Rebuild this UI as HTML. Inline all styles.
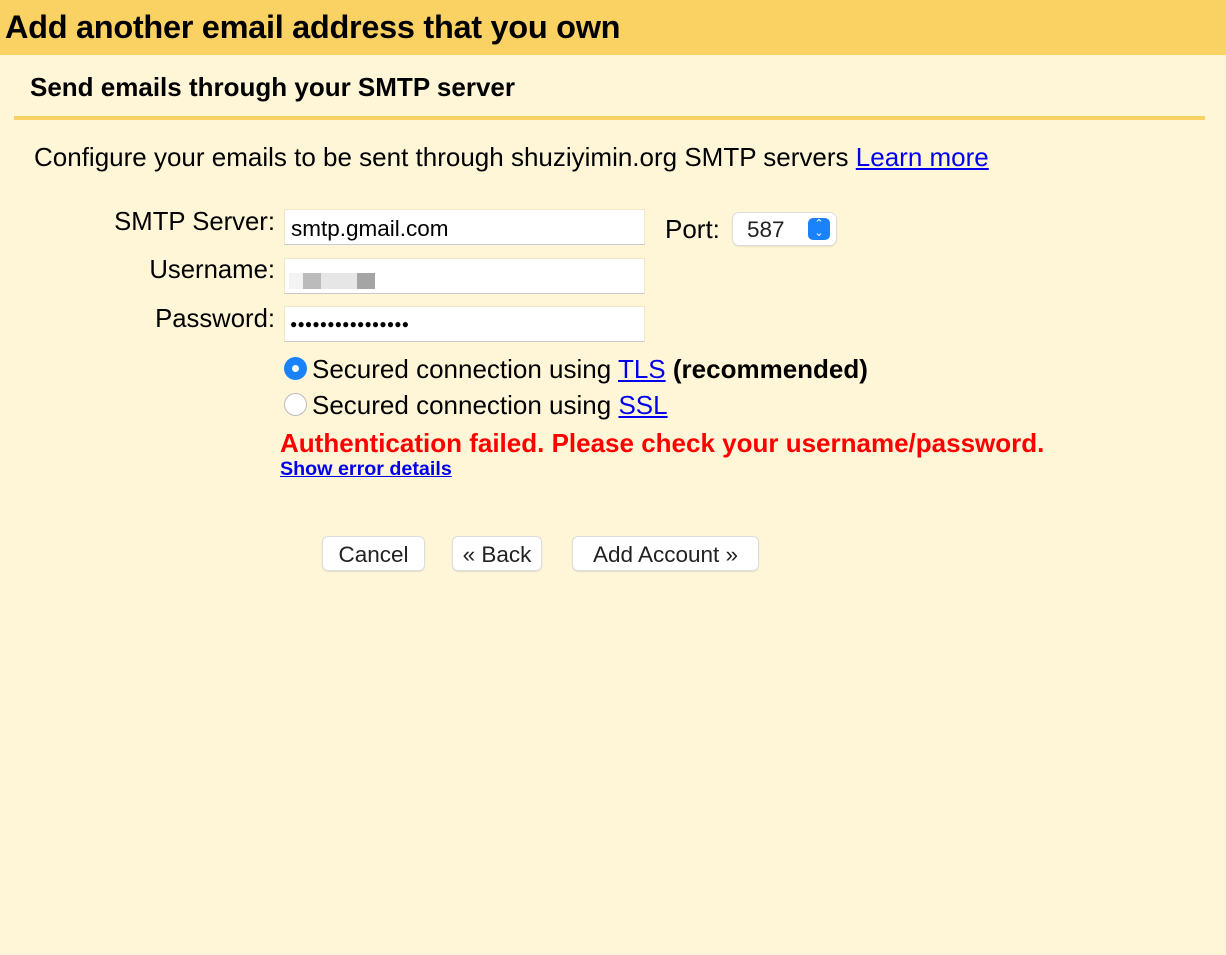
<!DOCTYPE html>
<html><head><style>
body{margin:0;width:1226px;height:955px;background:#fff6d8;font-family:"Liberation Sans",Arial,sans-serif;position:relative;overflow:hidden}
.a{position:absolute;white-space:nowrap}
.hdr{position:absolute;left:0;top:0;width:1226px;height:55px;background:#fad264}
.inp{position:absolute;left:284px;width:361px;height:36px;background:#fff;border:1px solid #f0e6c8;border-bottom:1px solid #c9c9c9;box-sizing:border-box;font-size:22.5px;line-height:38px;padding-left:6px}
.lbl{position:absolute;right:951px;font-size:25.7px}
a{color:#0000ee;text-decoration:underline}
.btn{position:absolute;top:537px;height:33px;background:#fff;border-radius:5px;box-shadow:0 0 0 1px #ddd,0 1px 2px rgba(0,0,0,.25);font-size:22.5px;line-height:36px;text-align:center;color:#222}
.radio{position:absolute;left:284px;width:23px;height:23px;border-radius:50%;box-sizing:border-box}
</style></head><body>
<div class="hdr"></div>
<div class="a" style="left:5px;top:9px;font-size:32.5px;font-weight:bold;letter-spacing:-0.3px">Add another email address that you own</div>
<div class="a" style="left:30px;top:72px;font-size:26px;font-weight:bold">Send emails through your SMTP server</div>
<div class="a" style="left:14px;top:116px;width:1191px;height:4px;background:#fad264"></div>
<div class="a" style="left:34px;top:142px;font-size:26px">Configure your emails to be sent through shuziyimin.org SMTP servers <a>Learn more</a></div>
<div class="lbl" style="top:208px">SMTP Server:</div>
<div class="lbl" style="top:256px">Username:</div>
<div class="lbl" style="top:305px">Password:</div>
<div class="inp" style="top:209px">smtp.gmail.com</div>
<div class="inp" style="top:258px"><span style="position:absolute;left:4px;top:14px;width:14px;height:16px;background:#f3f3f3"></span><span style="position:absolute;left:18px;top:14px;width:18px;height:16px;background:#bbb"></span><span style="position:absolute;left:36px;top:14px;width:36px;height:16px;background:#e6e6e6"></span><span style="position:absolute;left:72px;top:14px;width:18px;height:16px;background:#a5a5a5"></span></div>
<div class="inp" style="top:306px;font-size:12px;letter-spacing:0.2px;line-height:34px;padding-left:5px">●●●●●●●●●●●●●●●●</div>
<div class="a" style="left:665px;top:214px;font-size:26px">Port:</div>
<div class="a" style="left:733px;top:213px;width:103px;height:32px;background:#fff;border-radius:6px;box-shadow:0 0 0 1px #ddd,0 1px 2px rgba(0,0,0,.2)">
<span class="a" style="left:14px;top:4px;font-size:22.5px;color:#222">587</span>
<span class="a" style="left:75px;top:5px;width:22px;height:22px;background:#1a82fb;border-radius:5px;color:#fff;font-size:11px;line-height:9px;text-align:center;padding-top:2px;box-sizing:border-box">⌃<br>⌄</span></div>
<div class="radio" style="top:357px;background:#1a82fb"><div style="position:absolute;left:8px;top:8px;width:7px;height:7px;border-radius:50%;background:#fff"></div></div>
<div class="radio" style="top:393px;background:#fff;border:1px solid #bbb"></div>
<div class="a" style="left:312px;top:354px;font-size:26px">Secured connection using <a>TLS</a> <b>(recommended)</b></div>
<div class="a" style="left:312px;top:390px;font-size:26px">Secured connection using <a>SSL</a></div>
<div class="a" style="left:280px;top:428px;font-size:26px;font-weight:bold;color:#f00">Authentication failed. Please check your username/password.</div>
<div class="a" style="left:280px;top:458px;font-size:19.7px;font-weight:bold"><a>Show error details</a></div>
<div class="btn" style="left:323px;width:101px">Cancel</div>
<div class="btn" style="left:453px;width:88px">« Back</div>
<div class="btn" style="left:573px;width:185px">Add Account »</div>
</body></html>
